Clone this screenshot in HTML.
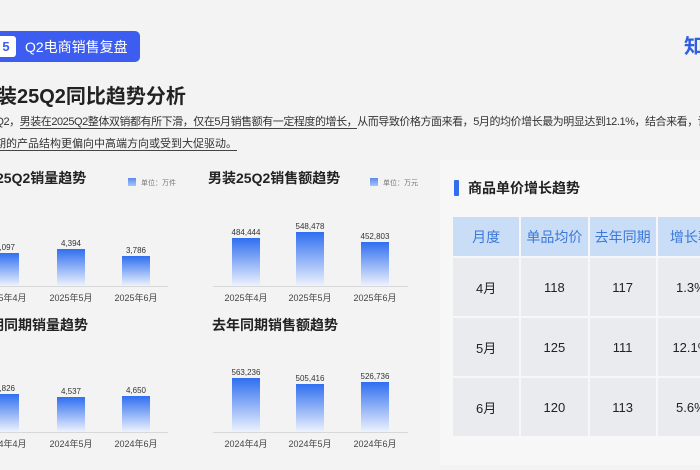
<!DOCTYPE html><html><head><meta charset="utf-8"><style>
body{margin:0;width:700px;height:470px;overflow:hidden;background:#f3f3f4;font-family:"Liberation Sans","Noto Sans CJK SC",sans-serif;position:relative;color:#222}
.a{position:absolute;white-space:nowrap}
.bar{position:absolute;width:28px;background:linear-gradient(#2f6ff0,#eef3fd)}
.v{position:absolute;font-size:8px;color:#333;width:50px;text-align:center}
.x{position:absolute;font-size:9px;color:#444;width:60px;text-align:center}
.base{position:absolute;height:1px;background:#d8d8d8}
.t{font-size:14px;font-weight:bold;color:#222}
.lg{font-size:7px;color:#777}
.lg i{display:inline-block;width:8px;height:8px;background:linear-gradient(#5b8cf0,#a9c3f7);margin-right:5px;vertical-align:-1px}
table{position:absolute;left:453px;top:217px;border-collapse:separate;border-spacing:2px;margin:-2px;table-layout:fixed;width:275px}
td,th{width:66px;padding:0;overflow:hidden;white-space:nowrap}
td{text-align:center;font-size:13px;background:#e9ebee;height:58px;color:#222}
th{height:39px;background:#c9ddf7;color:#3b78d8;font-size:14px;font-weight:normal}
u{text-decoration:none;border-bottom:1px solid #444}
</style></head><body>
<div class="a" style="left:440px;top:160px;width:260px;height:305px;background:#f7f7f8"></div>
<div class="a" style="left:-10px;top:31px;width:150px;height:31px;background:#3d5df0;border-radius:5px"></div>
<div class="a" style="left:-4px;top:36px;width:20px;height:21px;background:#fff;border-radius:3px;color:#3d5df0;font-weight:bold;font-size:13px;text-align:center;line-height:21px">5</div>
<div class="a" style="left:25px;top:37px;color:#fff;font-size:14px">Q2电商销售复盘</div>
<div class="a" style="left:684px;top:30px;color:#2f5ee0;font-size:20px;font-weight:bold">知</div>
<div class="a" style="left:-23px;top:80px;font-size:20px;font-weight:bold">男装25Q2同比趋势分析</div>
<div class="a" style="left:-16px;top:113px;font-size:11px;color:#333;letter-spacing:-0.45px">25Q2，<u>男装在2025Q2整体双销都有所下滑，仅在5月销售额有一定程度的增长，</u>从而导致价格方面来看，5月的均价增长最为明显达到12.1%，结合来看，说</div>
<div class="a" style="left:-5px;top:135px;font-size:11px;color:#333"><u>期的产品结构更偏向中高端方向或受到大促驱动。</u></div>

<div class="a t" style="left:-4px;top:168px">25Q2销量趋势</div>
<div class="a lg" style="left:128px;top:178px"><i></i>单位：万件</div>
<div class="a t" style="left:208px;top:168px">男装25Q2销售额趋势</div>
<div class="a lg" style="left:370px;top:178px"><i></i>单位：万元</div>
<div class="a t" style="left:-10px;top:315px">期同期销量趋势</div>
<div class="a t" style="left:212px;top:315px">去年同期销售额趋势</div>

<div class="base" style="left:0;top:286px;width:168px"></div>
<div class="bar" style="left:-9px;top:253px;height:33px"></div><div class="v" style="left:-20px;top:243px">4,097</div><div class="x" style="left:-25px;top:291px">2025年4月</div>
<div class="bar" style="left:57px;top:249px;height:37px"></div><div class="v" style="left:46px;top:239px">4,394</div><div class="x" style="left:41px;top:291px">2025年5月</div>
<div class="bar" style="left:122px;top:256px;height:30px"></div><div class="v" style="left:111px;top:246px">3,786</div><div class="x" style="left:106px;top:291px">2025年6月</div>

<div class="base" style="left:213px;top:286px;width:195px"></div>
<div class="bar" style="left:232px;top:238px;height:48px"></div><div class="v" style="left:221px;top:228px">484,444</div><div class="x" style="left:216px;top:291px">2025年4月</div>
<div class="bar" style="left:296px;top:232px;height:54px"></div><div class="v" style="left:285px;top:222px">548,478</div><div class="x" style="left:280px;top:291px">2025年5月</div>
<div class="bar" style="left:361px;top:242px;height:44px"></div><div class="v" style="left:350px;top:232px">452,803</div><div class="x" style="left:345px;top:291px">2025年6月</div>

<div class="base" style="left:0;top:432px;width:168px"></div>
<div class="bar" style="left:-9px;top:394px;height:38px"></div><div class="v" style="left:-20px;top:384px">3,826</div><div class="x" style="left:-25px;top:437px">2024年4月</div>
<div class="bar" style="left:57px;top:397px;height:35px"></div><div class="v" style="left:46px;top:387px">4,537</div><div class="x" style="left:41px;top:437px">2024年5月</div>
<div class="bar" style="left:122px;top:396px;height:36px"></div><div class="v" style="left:111px;top:386px">4,650</div><div class="x" style="left:106px;top:437px">2024年6月</div>

<div class="base" style="left:213px;top:432px;width:195px"></div>
<div class="bar" style="left:232px;top:378px;height:54px"></div><div class="v" style="left:221px;top:368px">563,236</div><div class="x" style="left:216px;top:437px">2024年4月</div>
<div class="bar" style="left:296px;top:384px;height:48px"></div><div class="v" style="left:285px;top:374px">505,416</div><div class="x" style="left:280px;top:437px">2024年5月</div>
<div class="bar" style="left:361px;top:382px;height:50px"></div><div class="v" style="left:350px;top:372px">526,736</div><div class="x" style="left:345px;top:437px">2024年6月</div>

<div class="a" style="left:454px;top:180px;width:5px;height:16px;background:#2f6ff0;border-radius:1px"></div>
<div class="a" style="left:468px;top:178px;font-size:14px;font-weight:bold">商品单价增长趋势</div>
<table>
<tr><th>月度</th><th>单品均价</th><th>去年同期</th><th>增长率</th></tr>
<tr><td>4月</td><td>118</td><td>117</td><td>1.3%</td></tr>
<tr><td>5月</td><td>125</td><td>111</td><td>12.1%</td></tr>
<tr><td>6月</td><td>120</td><td>113</td><td>5.6%</td></tr>
</table>
</body></html>
